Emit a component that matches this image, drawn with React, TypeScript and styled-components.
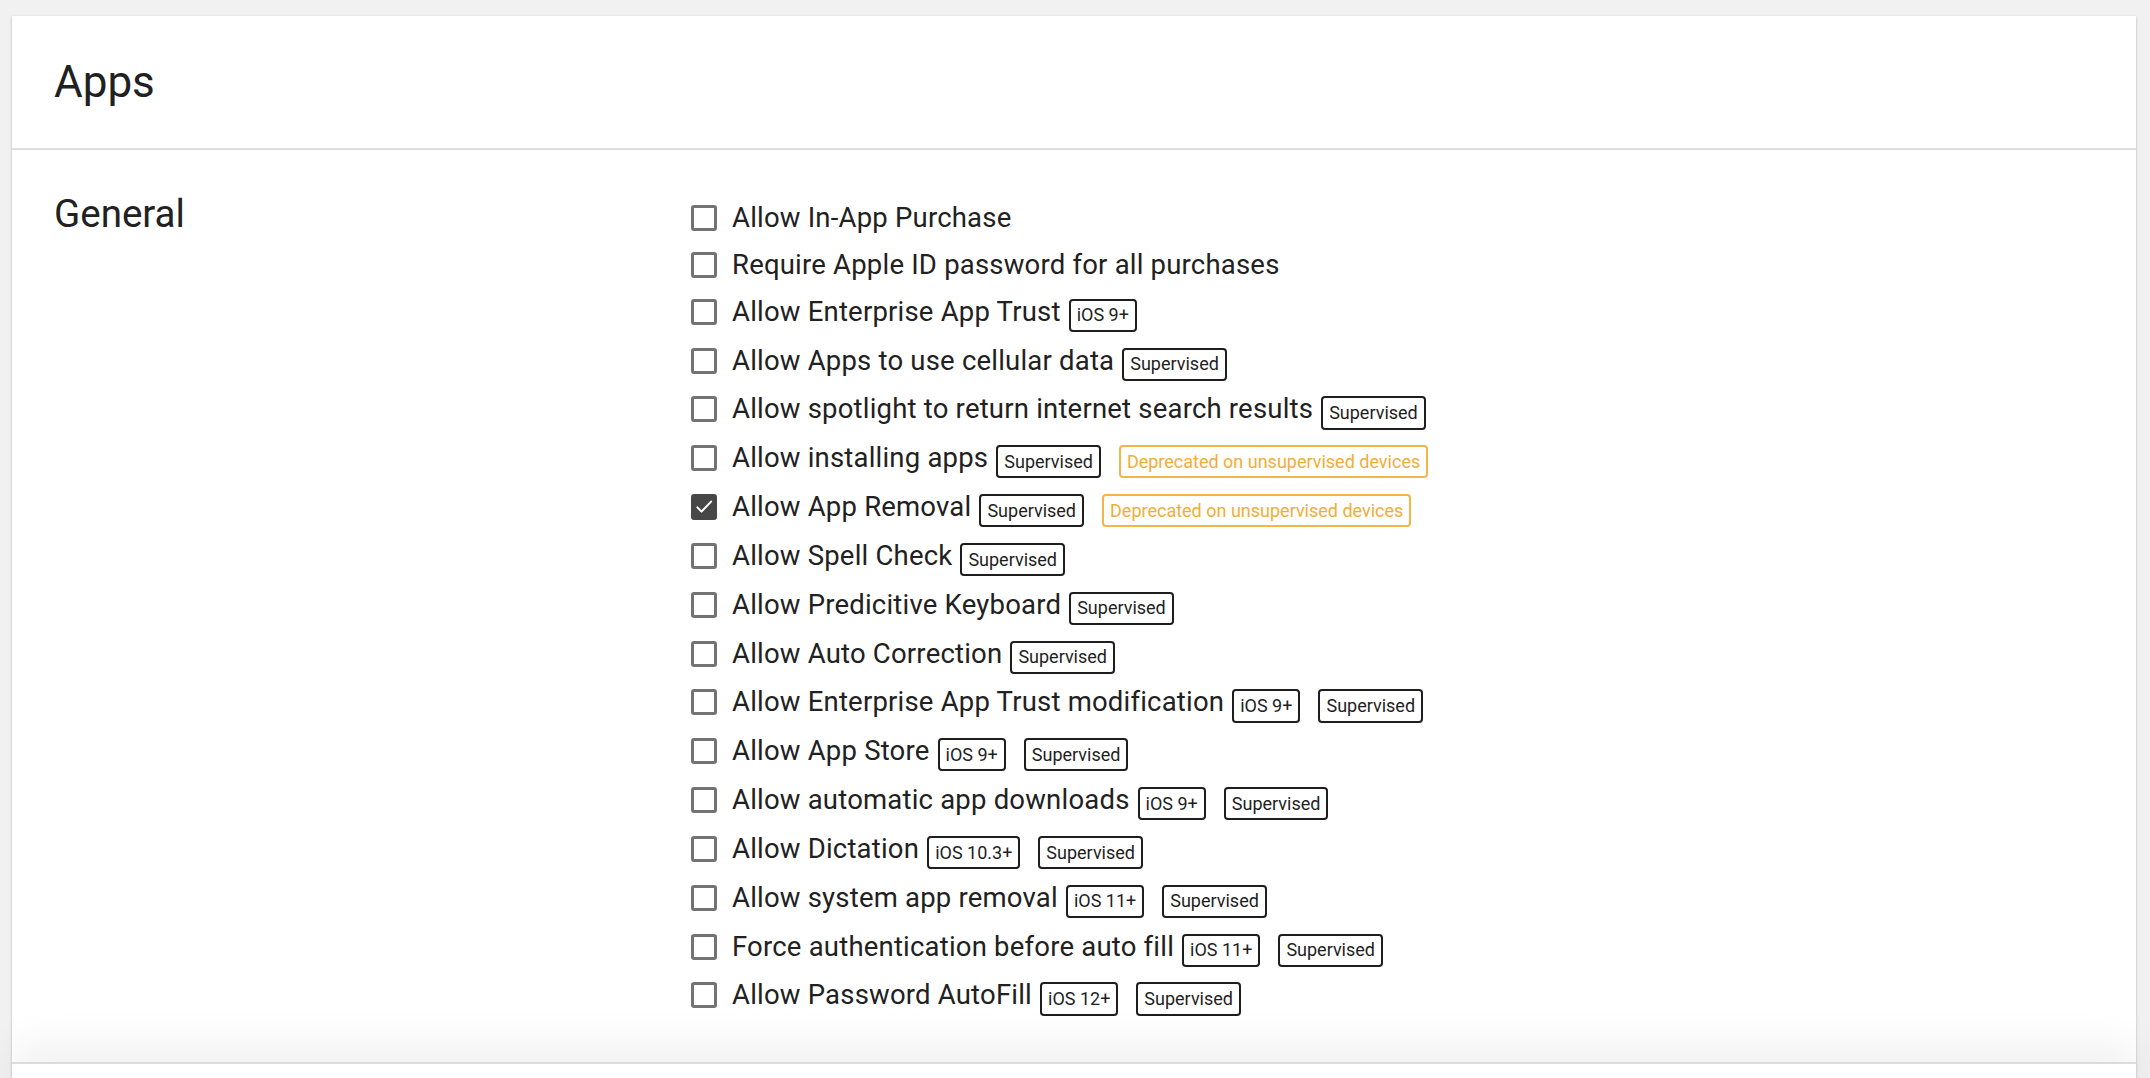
import { FC } from 'react';
import styled, { createGlobalStyle } from 'styled-components';

const GlobalStyle = createGlobalStyle`
  html, body {
    margin: 0;
    padding: 0;
    height: 100%;
    overflow: hidden;
    background: #f1f1f1;
  }
  body {
    font-family: Roboto, "Noto Sans", Arial, sans-serif;
    color: #212121;
  }
`;

type Restriction = {
  label: string;
  ios?: string;
  supervised?: boolean;
  deprecated?: boolean;
  checked?: boolean;
};

const restrictions: Restriction[] = [
  { label: 'Allow In-App Purchase' },
  { label: 'Require Apple ID password for all purchases' },
  { label: 'Allow Enterprise App Trust', ios: 'iOS 9+' },
  { label: 'Allow Apps to use cellular data', supervised: true },
  { label: 'Allow spotlight to return internet search results', supervised: true },
  { label: 'Allow installing apps', supervised: true, deprecated: true },
  { label: 'Allow App Removal', supervised: true, deprecated: true, checked: true },
  { label: 'Allow Spell Check', supervised: true },
  { label: 'Allow Predicitive Keyboard', supervised: true },
  { label: 'Allow Auto Correction', supervised: true },
  { label: 'Allow Enterprise App Trust modification', ios: 'iOS 9+', supervised: true },
  { label: 'Allow App Store', ios: 'iOS 9+', supervised: true },
  { label: 'Allow automatic app downloads', ios: 'iOS 9+', supervised: true },
  { label: 'Allow Dictation', ios: 'iOS 10.3+', supervised: true },
  { label: 'Allow system app removal', ios: 'iOS 11+', supervised: true },
  { label: 'Force authentication before auto fill', ios: 'iOS 11+', supervised: true },
  { label: 'Allow Password AutoFill', ios: 'iOS 12+', supervised: true },
];

const Page = styled.div`
  height: 100vh;
  overflow: hidden;
  box-sizing: border-box;
  padding: 16px 14px 0 12px;
`;

const Card = styled.div`
  background: #fff;
  box-shadow: 0 1px 3px rgba(0, 0, 0, 0.18), 0 1px 2px rgba(0, 0, 0, 0.08);
`;

const Header = styled.div`
  height: 132px;
  display: flex;
  align-items: center;
  padding: 0 42px;
  border-bottom: 2px solid #dedede;
`;

const Title = styled.h1`
  margin: 0;
  font-size: 44px;
  font-weight: 400;
  line-height: 1;
`;

const Body = styled.div`
  display: grid;
  grid-template-columns: 637px 1fr;
  padding: 44.5px 42px 41.5px;
`;

const SectionTitle = styled.h2`
  margin: 0;
  font-size: 38.5px;
  font-weight: 400;
  line-height: 1;
`;

const List = styled.div`
  display: flex;
  flex-direction: column;
`;

const Row = styled.label`
  display: flex;
  align-items: flex-start;
  box-sizing: border-box;
  min-height: 47px;
  padding: 10.3px 0 5.35px;
`;

const Box = styled.span<{ $checked?: boolean }>`
  flex: none;
  width: 26px;
  height: 26px;
  box-sizing: border-box;
  border: 3px solid ${(p) => (p.$checked ? '#474747' : '#737373')};
  border-radius: 3px;
  background: ${(p) => (p.$checked ? '#474747' : '#fff')};
  display: flex;
  align-items: center;
  justify-content: center;
  margin-right: 15px;
`;

const Text = styled.span`
  font-size: 27.5px;
  line-height: 26.5px;
  letter-spacing: 0.2px;
  white-space: nowrap;
`;

const Badge = styled.span<{ $warn?: boolean }>`
  flex: none;
  margin-left: 8px;
  & + & {
    margin-left: 18px;
  }
  padding: 2.6px 6px;
  border: 2px solid ${(p) => (p.$warn ? '#f5b545' : '#1e1e1e')};
  border-radius: 4px;
  color: ${(p) => (p.$warn ? '#f3ad34' : '#1e1e1e')};
  font-size: 18px;
  line-height: 24px;
  white-space: nowrap;
`;

const Footer = styled.div`
  height: 80px;
  border-top: 2px solid #dcdcdc;
  background: #fff;
  box-shadow: 0 -18px 40px rgba(0, 0, 0, 0.06);
  position: relative;
`;

const Check: FC = () => (
  <svg width="20" height="20" viewBox="0 0 24 24" fill="none">
    <path d="M4 12.5l5 5L20.5 5.5" stroke="#fff" strokeWidth="2.4" strokeLinecap="round" strokeLinejoin="round" />
  </svg>
);

const RestrictionRow: FC<{ item: Restriction }> = ({ item }) => (
  <Row>
    <Box $checked={item.checked}>{item.checked && <Check />}</Box>
    <Text>{item.label}</Text>
    {item.ios && <Badge>{item.ios}</Badge>}
    {item.supervised && <Badge>Supervised</Badge>}
    {item.deprecated && <Badge $warn>Deprecated on unsupervised devices</Badge>}
  </Row>
);

const App: FC = () => (
  <>
    <GlobalStyle />
    <Page>
      <Card>
        <Header>
          <Title>Apps</Title>
        </Header>
        <Body>
          <SectionTitle>General</SectionTitle>
          <List>
            {restrictions.map((item) => (
              <RestrictionRow key={item.label} item={item} />
            ))}
          </List>
        </Body>
        <Footer />
      </Card>
    </Page>
  </>
);

export default App;
